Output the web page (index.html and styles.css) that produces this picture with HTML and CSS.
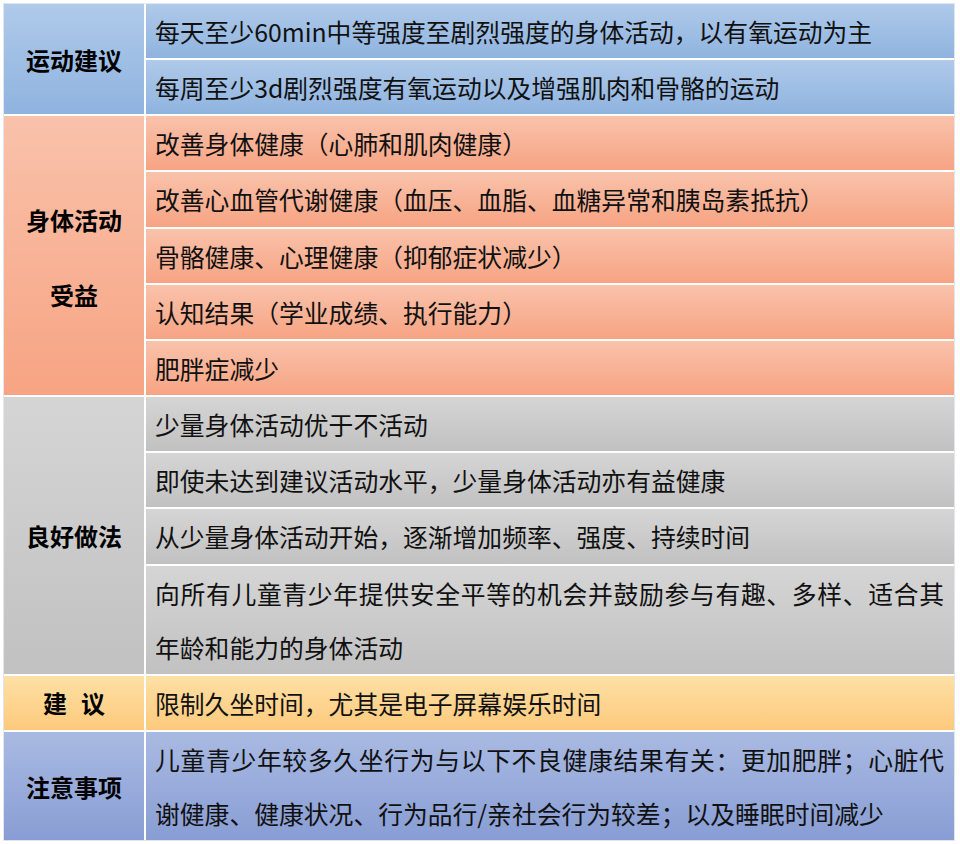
FILE: index.html
```html
<!DOCTYPE html>
<html lang="zh-CN">
<head>
<meta charset="utf-8">
<title>儿童青少年身体活动建议</title>
<link rel="stylesheet" href="styles.css">
</head>
<body>
<div class="table">
  <div class="label blue">运动建议</div>
  <div class="items">
    <div class="item blue">每天至少60min中等强度至剧烈强度的身体活动，以有氧运动为主</div>
    <div class="item blue">每周至少3d剧烈强度有氧运动以及增强肌肉和骨骼的运动</div>
  </div>

  <div class="label orange two-line"><span>身体活动</span><span>受益</span></div>
  <div class="items">
    <div class="item orange">改善身体健康（心肺和肌肉健康）</div>
    <div class="item orange">改善心血管代谢健康（血压、血脂、血糖异常和胰岛素抵抗）</div>
    <div class="item orange">骨骼健康、心理健康（抑郁症状减少）</div>
    <div class="item orange">认知结果（学业成绩、执行能力）</div>
    <div class="item orange">肥胖症减少</div>
  </div>

  <div class="label gray">良好做法</div>
  <div class="items">
    <div class="item gray">少量身体活动优于不活动</div>
    <div class="item gray">即使未达到建议活动水平，少量身体活动亦有益健康</div>
    <div class="item gray">从少量身体活动开始，逐渐增加频率、强度、持续时间</div>
    <div class="item gray">向所有儿童青少年提供安全平等的机会并鼓励参与有趣、多样、适合其年龄和能力的身体活动</div>
  </div>

  <div class="label yellow spaced"><span>建</span><span>议</span></div>
  <div class="items">
    <div class="item yellow">限制久坐时间，尤其是电子屏幕娱乐时间</div>
  </div>

  <div class="label purple">注意事项</div>
  <div class="items">
    <div class="item purple">儿童青少年较多久坐行为与以下不良健康结果有关：更加肥胖；心脏代谢健康、健康状况、行为品行/亲社会行为较差；以及睡眠时间减少</div>
  </div>
</div>
</body>
</html>
```
FILE: styles.css
```css
html, body {
  margin: 0;
  padding: 0;
  background: #ffffff;
}

body {
  font-family: "Noto Sans CJK SC", "Noto Sans", sans-serif;
  color: #111111;
}

.table {
  display: grid;
  grid-template-columns: 140px 1fr;
  gap: 2px;
  width: 952px;
  box-sizing: border-box;
  margin: 3px 0 0 3px;
  border: 1px solid #e2e6ec;
  background: #ffffff;
}

.items {
  display: flex;
  flex-direction: column;
  gap: 2px;
}

.label {
  display: flex;
  align-items: center;
  justify-content: center;
  font-size: 24px;
  font-weight: 700;
  color: #000000;
}

.label.two-line {
  flex-direction: column;
  line-height: 75px;
  padding-top: 3px;
  box-sizing: border-box;
}

.label.spaced {
  gap: 14px;
}

.item {
  font-size: 24.8px;
  line-height: 54.15px;
  padding: 0 10px 0 9px;
  text-align: justify;
  white-space: normal;
}

.blue { background: linear-gradient(#afcaea, #8fb3df); }
.orange { background: linear-gradient(#f9c2ab, #f7a483); }
.gray { background: linear-gradient(#d5d5d5, #c1c1c1); }
.yellow { background: linear-gradient(#fee0a6, #fdca7c); }
.purple { background: linear-gradient(#a9bae2, #889dd4); }
```
